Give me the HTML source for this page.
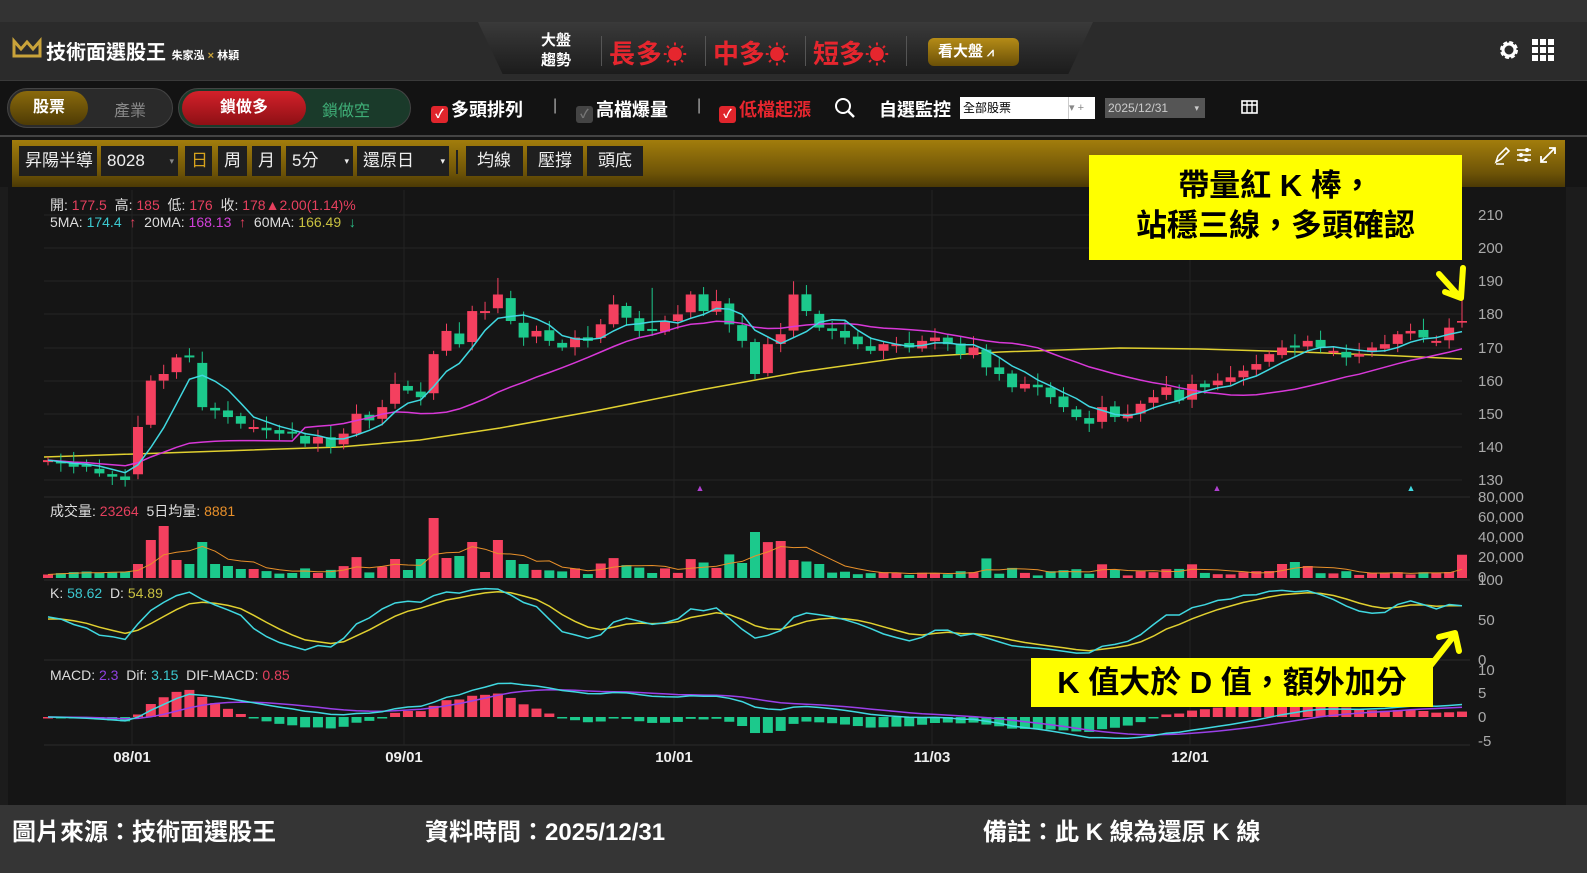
<!DOCTYPE html>
<html><head><meta charset="utf-8">
<style>
*{margin:0;padding:0;box-sizing:border-box}
body{width:1587px;height:873px;overflow:hidden;background:#151515;font-family:"Liberation Sans","Noto Sans CJK TC",sans-serif;position:relative;color:#fff}
.abs{position:absolute}
.top{left:0;top:0;width:1587px;height:80px;background:#2b2b2b}
.topstrip{left:0;top:0;width:1587px;height:22px;background:#333}
.trap{left:478px;top:22px;width:615px;height:52px;background:linear-gradient(#3a3a3a,#1c1c1c);clip-path:polygon(0 0,100% 0,96% 100%,4% 100%)}
.tb{left:0;top:80px;width:1587px;height:57px;background:#131313;border-top:1px solid #3a3a3a;border-bottom:2px solid #444}
.gold{left:12px;top:140px;width:1553px;height:47px;background:linear-gradient(#a27d0c,#6e5407 70%,#4b3905)}
.gb{position:absolute;top:146px;height:30px;background:#1f1f1f;color:#eee;font-size:17px;line-height:30px;padding-left:6px}
.foot{left:0;top:805px;width:1587px;height:68px;background:#353535;font-size:24px;font-weight:bold;line-height:56px}
.cb{display:inline-block;width:17px;height:17px;border-radius:3px;vertical-align:-2px;margin-right:3px;font-size:12px;line-height:17px;text-align:center;color:#fff}
.t18{font-size:18px;font-weight:bold}
</style></head><body>
<div class="abs top"></div><div class="abs topstrip"></div>
<div class="abs trap"></div>
<svg class="abs" style="left:12px;top:37px" width="30" height="22"><path d="M2 4 L2 19 L28 19 L28 4 L21 12 L15 5 L9 12 Z" fill="none" stroke="#c9a33a" stroke-width="3"/></svg>
<div class="abs" style="left:46px;top:36px;font-size:20px;font-weight:bold">技術面選股王 <span style="font-size:11px">朱家泓 <span style="color:#c9a33a">×</span> 林穎</span></div>
<div class="abs" style="left:541px;top:31px;font-size:15px;font-weight:bold;line-height:20px">大盤<br>趨勢</div>
<div class="abs" style="left:601px;top:36px;width:1px;height:30px;background:#555"></div>
<div class="abs" style="left:609px;top:34px;font-size:26px;font-weight:bold;color:#e6262e;letter-spacing:1px">長多<span style="font-size:24px">☀</span></div>
<div class="abs" style="left:705px;top:36px;width:1px;height:30px;background:#555"></div>
<div class="abs" style="left:713px;top:34px;font-size:26px;font-weight:bold;color:#e6262e">中多<span style="font-size:24px">☀</span></div>
<div class="abs" style="left:805px;top:36px;width:1px;height:30px;background:#555"></div>
<div class="abs" style="left:813px;top:34px;font-size:26px;font-weight:bold;color:#e6262e">短多<span style="font-size:24px">☀</span></div>
<div class="abs" style="left:906px;top:36px;width:1px;height:30px;background:#555"></div>
<div class="abs" style="left:928px;top:38px;width:91px;height:28px;border-radius:6px;background:linear-gradient(#b58c17,#6b5007);font-size:15px;font-weight:bold;line-height:28px;padding-left:10px">看大盤 <span style="font-size:12px">⩘</span></div>
<svg class="abs" style="left:1498px;top:39px" width="22" height="22" viewBox="0 0 22 22"><circle cx="11" cy="11" r="7" fill="none" stroke="#fff" stroke-width="4" stroke-dasharray="3.5 2"/><circle cx="11" cy="11" r="6" fill="none" stroke="#fff" stroke-width="3"/></svg>
<svg class="abs" style="left:1532px;top:39px" width="24" height="24"><g fill="#fff"><rect x="0" y="0" width="6" height="6"/><rect x="8" y="0" width="6" height="6"/><rect x="16" y="0" width="6" height="6"/><rect x="0" y="8" width="6" height="6"/><rect x="8" y="8" width="6" height="6"/><rect x="16" y="8" width="6" height="6"/><rect x="0" y="16" width="6" height="6"/><rect x="8" y="16" width="6" height="6"/><rect x="16" y="16" width="6" height="6"/></g></svg>

<div class="abs tb"></div>
<div class="abs" style="left:7px;top:88px;width:166px;height:40px;border-radius:20px;background:#2a2a2a;border:1px solid #444"></div>
<div class="abs" style="left:10px;top:91px;width:78px;height:34px;border-radius:17px;background:linear-gradient(#8a6a0c,#4e3b05);font-size:16px;font-weight:bold;line-height:34px;text-align:center">股票</div>
<div class="abs" style="left:114px;top:97px;font-size:16px;color:#888">產業</div>
<div class="abs" style="left:178px;top:88px;width:233px;height:40px;border-radius:20px;background:#1a3a2a;border:1px solid #444"></div>
<div class="abs" style="left:182px;top:91px;width:124px;height:34px;border-radius:17px;background:linear-gradient(#d3212a,#8e1015);font-size:16px;font-weight:bold;line-height:34px;text-align:center">鎖做多</div>
<div class="abs" style="left:322px;top:97px;font-size:16px;color:#3fae77">鎖做空</div>
<div class="abs t18" style="left:431px;top:96px"><span class="cb" style="background:#e0252c">✓</span>多頭排列</div>
<div class="abs" style="left:553px;top:97px;color:#aaa;font-size:16px">|</div>
<div class="abs t18" style="left:576px;top:96px"><span class="cb" style="background:#444;color:#777">✓</span>高檔爆量</div>
<div class="abs" style="left:697px;top:97px;color:#aaa;font-size:16px">|</div>
<div class="abs t18" style="left:719px;top:96px;color:#e6262e"><span class="cb" style="background:#e0252c">✓</span>低檔起漲</div>
<svg class="abs" style="left:834px;top:97px" width="22" height="22"><circle cx="9" cy="9" r="7" fill="none" stroke="#fff" stroke-width="2"/><path d="M14 14 L20 20" stroke="#fff" stroke-width="2.5"/></svg>
<div class="abs t18" style="left:879px;top:96px">自選監控</div>
<div class="abs" style="left:960px;top:97px;width:135px;height:22px;background:#fff;color:#000;font-size:12px;line-height:22px;padding-left:3px">全部股票<span style="position:absolute;left:108px;top:0;width:27px;height:22px;border-left:1px solid #ccc;color:#888;font-size:11px">▾ +</span></div>
<div class="abs" style="left:1105px;top:98px;width:100px;height:20px;background:#555;color:#ccc;font-size:12px;line-height:20px;padding-left:3px">2025/12/31<span style="position:absolute;right:6px;font-size:9px">▾</span></div>
<svg class="abs" style="left:1241px;top:99px" width="20" height="18"><rect x="1" y="2" width="15" height="12" fill="none" stroke="#fff" stroke-width="1.6"/><path d="M1 6H16M6 2V14M11 2V14" stroke="#fff" stroke-width="1.4"/></svg>

<div class="abs gold"></div>
<div class="gb" style="left:19px;width:78px">昇陽半導</div>
<div class="gb" style="left:101px;width:77px">8028<span style="position:absolute;right:4px;font-size:9px;color:#888">▾</span></div>
<div class="gb" style="left:185px;width:27px;color:#d6a21d">日</div>
<div class="gb" style="left:218px;width:29px">周</div>
<div class="gb" style="left:252px;width:29px">月</div>
<div class="gb" style="left:286px;width:67px">5分<span style="position:absolute;right:4px;font-size:9px">▾</span></div>
<div class="gb" style="left:357px;width:92px">還原日<span style="position:absolute;right:4px;font-size:9px">▾</span></div>
<div class="abs" style="left:456px;top:150px;width:2px;height:24px;background:#222"></div>
<div class="gb" style="left:466px;width:57px;padding-left:11px">均線</div>
<div class="gb" style="left:527px;width:56px;padding-left:11px">壓撐</div>
<div class="gb" style="left:587px;width:56px;padding-left:11px">頭底</div>
<svg class="abs" style="left:1493px;top:145px" width="65" height="20"><path d="M3 17 L5 11 L13 3 L16 6 L8 14 Z M3 19 H11" fill="none" stroke="#fff" stroke-width="1.6"/><path d="M24 5H38M24 10H38M24 15H38" stroke="#fff" stroke-width="1.6"/><circle cx="34" cy="5" r="2" fill="#fff"/><circle cx="28" cy="10" r="2" fill="#fff"/><circle cx="33" cy="15" r="2" fill="#fff"/><path d="M48 17 L62 3 M56 3H62V9 M48 11V17H54" fill="none" stroke="#fff" stroke-width="1.8"/></svg>

<svg id="ch" class="abs" style="left:0;top:187px" width="1587" height="618" viewBox="0 187 1587 618"></svg>

<div class="abs" style="left:50px;top:197px;font-size:14px;color:#ddd;line-height:17px;white-space:pre">開: <span style="color:#e5405e">177.5</span>  高: <span style="color:#e5405e">185</span>  低: <span style="color:#e5405e">176</span>  收: <span style="color:#e5405e">178▲2.00(1.14)%</span><br>5MA: <span style="color:#3cc8cf">174.4</span>  <span style="color:#e5405e">↑</span>  20MA: <span style="color:#d040d8">168.13</span>  <span style="color:#e5405e">↑</span>  60MA: <span style="color:#c8c040">166.49</span>  <span style="color:#2ac28a">↓</span></div>
<div class="abs" style="left:50px;top:501px;font-size:14px;color:#ddd;white-space:pre">成交量: <span style="color:#e5405e">23264</span>  5日均量: <span style="color:#e8902a">8881</span></div>
<div class="abs" style="left:50px;top:585px;font-size:14px;color:#ddd;white-space:pre">K: <span style="color:#3cc8cf">58.62</span>  D: <span style="color:#c8c040">54.89</span></div>
<div class="abs" style="left:50px;top:667px;font-size:14px;color:#ddd;white-space:pre">MACD: <span style="color:#9040e0">2.3</span>  Dif: <span style="color:#3cc8cf">3.15</span>  DIF-MACD: <span style="color:#e5405e">0.85</span></div>

<div class="abs" style="left:1089px;top:155px;width:373px;height:105px;background:#ffff00;color:#000;font-size:31px;font-weight:bold;text-align:center;line-height:40px;padding-top:11px">帶量紅 K 棒，<br>站穩三線，多頭確認</div>
<div class="abs" style="left:1031px;top:658px;width:402px;height:49px;background:#ffff00;color:#000;font-size:31px;font-weight:bold;text-align:center;line-height:49px">K 值大於 D 值，額外加分</div>
<svg class="abs" style="left:1425px;top:262px" width="50" height="45"><path d="M14 12 L33 33 M38 6 L36 36 L20 30" fill="none" stroke="#ffff00" stroke-width="6" stroke-linecap="round" stroke-linejoin="round"/></svg>
<svg class="abs" style="left:1425px;top:625px" width="40" height="45"><path d="M6 40 L28 12 M14 12 L30 8 L34 26" fill="none" stroke="#ffff00" stroke-width="6" stroke-linecap="round" stroke-linejoin="round"/></svg>

<div class="abs foot"><span class="abs" style="left:12px">圖片來源：技術面選股王</span><span class="abs" style="left:425px">資料時間：2025/12/31</span><span class="abs" style="left:983px">備註：此 K 線為還原 K 線</span></div>

<script>
var C=[136,135,134,134,132,131,130,146,160,162,167,167,152,151,149,147,146,145,144,144,141,143,140,144,150,148,152,159,157,155,168,175,171,181,181,186,178,173,175,172,170,173,172,177,183,179,175,175,178,180,186,181,184,177,172,162,171,174,186,181,176,175,173,171,169,171,171,170,172,173,171,168,170,164,162,158,159,158,155,152,149,147,152,149,150,153,155,158,154,159,158,160,161,163,165,168,170,170,172,170,169,167,168,170,171,174,175,173,172,176,178];
var N=C.length,x0=48,x1=1462,dx=(x1-x0)/(N-1);
var svg=document.getElementById('ch'),s='';
function X(i){return x0+i*dx}
function PY(p){return 215+(210-p)*3.3125}
var R='#f4405f',G='#1cc98c';
s+='<rect x="0" y="187" width="1587" height="618" fill="#151515"/><rect x="0" y="187" width="8" height="618" fill="#1c1c1c"/><rect x="1566" y="187" width="21" height="618" fill="#1c1c1c"/>';
[215,248,281,314,348,381,414,447,480].forEach(function(y){s+='<line x1="44" x2="1462" y1="'+y+'" y2="'+y+'" stroke="#252525"/>'});
[497,580,660,745].forEach(function(y){s+='<line x1="44" x2="1470" y1="'+y+'" y2="'+y+'" stroke="#2c2c2c"/>'});
[132,404,674,932,1190].forEach(function(x){s+='<line x1="'+x+'" x2="'+x+'" y1="190" y2="745" stroke="#232323"/>'});
var ax=[[210,215],[200,248],[190,281],[180,314],[170,348],[160,381],[150,414],[140,447],[130,480],['80,000',497],['60,000',517],['40,000',537],['20,000',557],['0',577],['100',580],['50',620],['0',660],['10',670],['5',693],['0',717],['-5',741]];
ax.forEach(function(a){s+='<text x="1478" y="'+(a[1]+5)+'" fill="#aaa" font-size="15" font-family="Liberation Sans">'+a[0]+'</text>'});
[['08/01',132],['09/01',404],['10/01',674],['11/03',932],['12/01',1190]].forEach(function(a){s+='<text x="'+a[1]+'" y="762" fill="#eee" font-size="15" font-weight="bold" text-anchor="middle" font-family="Liberation Sans">'+a[0]+'</text>'});
var O=[],H=[],L=[];
for(var i=0;i<N;i++){var p=i?C[i-1]:C[0]+1;var o=p+(C[i]-p)*0.08+((i%4)-1.5)*0.3;if(Math.abs(o-C[i])<0.5)o=C[i]+(i%2?0.6:-0.6);O[i]=o;H[i]=Math.max(o,C[i])+1+(i*7%5)*0.6;L[i]=Math.min(o,C[i])-1-(i*3%4)*0.5;}
H[N-1]=185;L[N-1]=176;O[N-1]=177.5;H[35]=191;H[58]=190;H[47]=188;
s+='<polyline fill="none" stroke="#e0d030" stroke-width="1.5" points="44,457 340,447 420,440 500,428 600,410 700,390 800,372 900,358 1000,352 1120,348 1200,349 1300,352 1400,356 1462,359"/>';
function ma(n){var r=[];for(var i=0;i<N;i++){var a=0,k=0;for(var j=Math.max(0,i-n+1);j<=i;j++){a+=C[j];k++}r.push(a/k)}return r}
function line(arr,f,col,w){var p=arr.map(function(v,i){return X(i).toFixed(1)+','+f(v).toFixed(1)}).join(' ');return '<polyline fill="none" stroke="'+col+'" stroke-width="'+(w||1.5)+'" points="'+p+'"/>'}
var m20=ma(20),m5=ma(5);
for(var i=0;i<20;i++)m20[i]=m20[i]*0.6+136*0.4;
for(i=0;i<N;i++){var up=C[i]>=O[i],col=up?R:G,x=X(i),yt=PY(Math.max(O[i],C[i])),yb=PY(Math.min(O[i],C[i]));
s+='<line x1="'+x+'" x2="'+x+'" y1="'+PY(H[i])+'" y2="'+PY(L[i])+'" stroke="'+col+'"/>';
s+='<rect x="'+(x-5)+'" y="'+yt+'" width="10" height="'+Math.max(1.5,yb-yt)+'" fill="'+col+'"/>';}
s+=line(m20,PY,'#d838d8');s+=line(m5,PY,'#40d8e0');
s+='<text x="700" y="491" fill="#b040d0" font-size="9" text-anchor="middle">▲</text><text x="1217" y="491" fill="#b040d0" font-size="9" text-anchor="middle">▲</text><text x="1411" y="491" fill="#40d8e0" font-size="9" text-anchor="middle">▲</text>';
var V=[];for(i=0;i<N;i++){var d=Math.abs(C[i]-(i?C[i-1]:C[i]));var base=(i<62)?3500:2200;V.push(base+d*d*400+(i*37%7)*500)}
var ov={7:14000,8:38000,9:52000,10:18000,11:14000,12:36000,13:14000,14:12000,15:9000,16:9000,27:19000,28:8000,29:19000,30:60000,31:20000,32:22000,33:36000,35:38000,36:18000,37:14000,57:37000,58:18000,95:7000,96:14000,97:16000,98:12000,N:0};
for(var kk in ov)if(kk<N)V[kk]=ov[kk];
V[N-1]=23264;V[N-3]=5000;V[N-2]=6000;
for(i=0;i<N;i++){var col=C[i]>=O[i]?R:G,h=V[i]/1000;s+='<rect x="'+(X(i)-5)+'" y="'+(578-h)+'" width="10" height="'+h+'" fill="'+col+'"/>'}
var va=[];for(i=0;i<N;i++){var a=0,k=0;for(var j=Math.max(0,i-4);j<=i;j++){a+=V[j];k++}va.push(a/k)}
s+=line(va,function(v){return 578-v/1000},'#e8902a',1);
var K=[],D=[],k=50,dd=50;for(i=0;i<N;i++){var hh=-1e9,ll=1e9;for(j=Math.max(0,i-8);j<=i;j++){hh=Math.max(hh,H[j]);ll=Math.min(ll,L[j])}var rsv=hh>ll?(C[i]-ll)/(hh-ll)*100:50;k=k*2/3+rsv/3;dd=dd*2/3+k/3;K.push(k);D.push(dd)}
var KY=function(v){return 660-v*0.8};
s+=line(D,KY,'#e0d030');s+=line(K,KY,'#40d8e0');
var e12=C[0],e26=C[0],dea=0,DIF=[],DEA=[];for(i=0;i<N;i++){e12=e12+(C[i]-e12)*2/13;e26=e26+(C[i]-e26)*2/27;var df=e12-e26;dea=dea+(df-dea)*0.2;DIF.push(df);DEA.push(dea)}
var MY=function(v){return 717-v*3.5};
for(i=0;i<N;i++){var hv=(DIF[i]-DEA[i])*2,y=MY(Math.max(0,hv)),h=Math.max(1.5,Math.abs(hv)*3.5);s+='<rect x="'+(X(i)-5)+'" y="'+y+'" width="10" height="'+h+'" fill="'+(hv>=0?R:G)+'"/>'}
s+=line(DEA,MY,'#9a40e8');s+=line(DIF,MY,'#40d8e0');
svg.innerHTML=s;
</script>
</body></html>
